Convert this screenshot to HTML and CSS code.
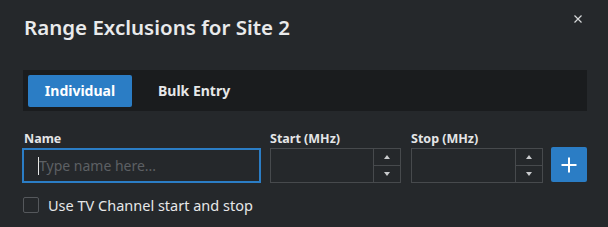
FILE: index.html
```html
<!DOCTYPE html>
<html>
<head>
<meta charset="utf-8">
<link rel="stylesheet" href="styles.css">
</head>
<body>
<div class="modal">
  <div class="header">
    <h1 class="title">Range Exclusions for Site 2</h1>
    <button class="close" aria-label="Close">
      <svg width="8" height="8" viewBox="0 0 8 8"><path d="M0.5 0.5L7.5 7.5M7.5 0.5L0.5 7.5" stroke="#d6d8da" stroke-width="1.2" fill="none"/></svg>
    </button>
  </div>
  <div class="tabs">
    <button class="tab active">Individual</button>
    <button class="tab">Bulk Entry</button>
  </div>
  <div class="form-row">
    <div class="field name-field">
      <label class="label">Name</label>
      <div class="text-input focused"><span class="caret"></span><span class="placeholder">Type name here...</span></div>
    </div>
    <div class="field num-field">
      <label class="label">Start (MHz)</label>
      <div class="num-input">
        <div class="num-value"></div>
        <div class="spin">
          <div class="spin-btn"><span class="tri up"></span></div>
          <div class="spin-btn"><span class="tri down"></span></div>
        </div>
      </div>
    </div>
    <div class="field num-field stop">
      <label class="label">Stop (MHz)</label>
      <div class="num-input">
        <div class="num-value"></div>
        <div class="spin">
          <div class="spin-btn"><span class="tri up"></span></div>
          <div class="spin-btn"><span class="tri down"></span></div>
        </div>
      </div>
    </div>
    <button class="add" aria-label="Add">
      <svg width="16" height="16" viewBox="0 0 16 16"><path d="M8 0.5V15.5M0.5 8H15.5" stroke="#ffffff" stroke-width="2" fill="none"/></svg>
    </button>
  </div>
  <div class="check-row">
    <span class="checkbox"></span>
    <span class="check-label">Use TV Channel start and stop</span>
  </div>
</div>
</body>
</html>
```
FILE: styles.css
```css
html, body {
  margin: 0;
  padding: 0;
  background: #25282b;
}
body {
  font-family: "Noto Sans", "Open Sans", sans-serif;
  color: #e6e7e8;
  width: 608px;
  height: 227px;
  overflow: hidden;
}
.modal {
  padding: 0 21px 0 22px;
}
.header {
  display: flex;
  justify-content: space-between;
  align-items: flex-start;
  height: 70px;
}
.title {
  margin: 0;
  padding: 12px 0 0 2px;
  font-size: 20.5px;
  font-weight: 600;
  line-height: 30px;
  color: #e9eaeb;
  letter-spacing: 0;
}
.close {
  background: none;
  border: 0;
  padding: 0;
  margin: 15px 4px 0 0;
  width: 9px;
  height: 9px;
  display: flex;
}
.tabs {
  display: flex;
  align-items: center;
  background: #1a1c1e;
  height: 41px;
  margin-left: 1px;
  padding: 0 5px;
  gap: 0;
}
.tab {
  background: none;
  border: 0;
  color: #e6e7e8;
  font-family: inherit;
  font-size: 14px;
  font-weight: 700;
  height: 32px;
  padding: 0 21px 0 26px;
  border-radius: 2px;
}
.tab.active {
  background: #2b7dc5;
  color: #ffffff;
  width: 104px;
  padding: 0;
}
.form-row {
  display: flex;
  align-items: flex-end;
  margin-top: 20px;
}
.field {
  display: flex;
  flex-direction: column;
}
.label {
  font-size: 12.5px;
  font-weight: 700;
  line-height: 16px;
  padding-left: 2px;
  margin-bottom: 1px;
  color: #e4e5e6;
}
.name-field {
  width: 239px;
}
.text-input {
  box-sizing: border-box;
  height: 35px;
  border: 1px solid #474a4d;
  display: flex;
  align-items: center;
  padding-left: 15px;
}
.text-input.focused {
  border: 2px solid #2b7dc5;
  padding-left: 14px;
}
.caret {
  width: 1px;
  height: 18px;
  background: #e6e7e8;
}
.placeholder {
  font-size: 14px;
  color: #5d6064;
  margin-left: 0;
}
.num-field {
  width: 131px;
  margin-left: 9px;
}
.num-field .label {
  padding-left: 0;
}
.num-field.stop {
  width: 132px;
  margin-left: 10px;
}
.num-input {
  box-sizing: border-box;
  height: 35px;
  border: 1px solid #474a4d;
  display: flex;
}
.num-value {
  flex: 1;
}
.spin {
  width: 26px;
  border-left: 1px solid #474a4d;
  display: flex;
  flex-direction: column;
}
.spin-btn {
  flex: 1;
  display: flex;
  align-items: center;
  justify-content: center;
}
.spin-btn + .spin-btn {
  border-top: 1px solid #474a4d;
}
.tri {
  width: 0;
  height: 0;
  border-left: 3.5px solid transparent;
  border-right: 3.5px solid transparent;
}
.tri.up {
  border-bottom: 4px solid #c9cbcd;
}
.tri.down {
  border-top: 4px solid #c9cbcd;
}
.add {
  box-sizing: border-box;
  width: 36px;
  height: 35px;
  margin-left: 8px;
  margin-bottom: 1px;
  background: #2b7dc5;
  border: 0;
  border-radius: 2px;
  display: flex;
  align-items: center;
  justify-content: center;
  padding: 0;
}
.check-row {
  display: flex;
  align-items: center;
  margin-top: 12px;
  padding-left: 1px;
}
.checkbox {
  box-sizing: border-box;
  width: 16px;
  height: 16px;
  border: 1px solid #55585c;
  border-radius: 2px;
}
.check-label {
  font-size: 14.5px;
  margin-left: 9px;
  color: #e6e7e8;
}
```
